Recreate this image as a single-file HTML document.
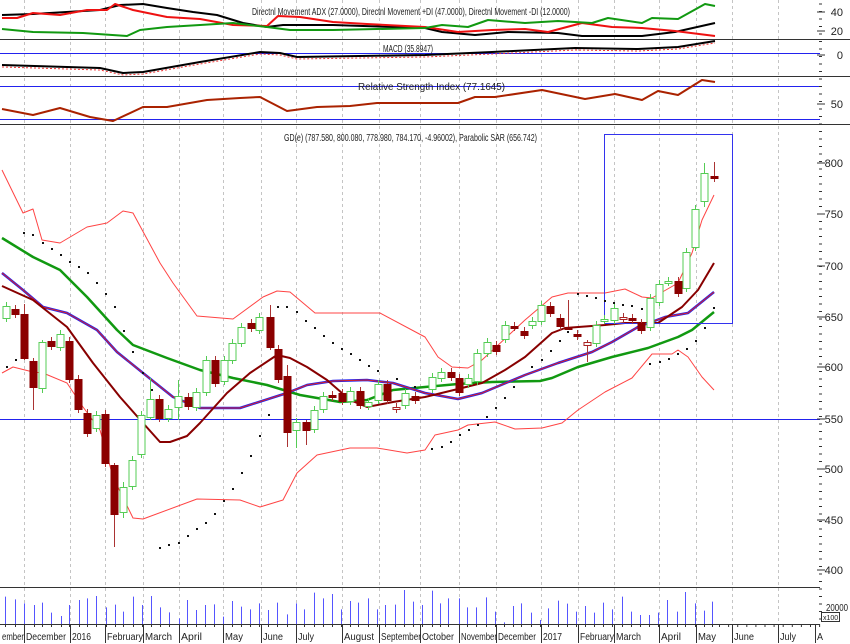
<!DOCTYPE html>
<html><head><meta charset="utf-8">
<style>
html,body{margin:0;padding:0;background:#fff;width:850px;height:644px;overflow:hidden}
svg{display:block}
text{font-family:"Liberation Sans Narrow","Liberation Sans",sans-serif;fill:#222}
</style></head>
<body>
<svg id="c" width="850" height="644" viewBox="0 0 850 644" xmlns="http://www.w3.org/2000/svg">
<rect width="850" height="644" fill="#fff"/>
<g id="grid"></g>
<g id="lines"></g>
<g id="cand"></g>
<g id="txt">
<text x="252" y="15" font-size="10" textLength="318" lengthAdjust="spacingAndGlyphs">Directnl Movement ADX (27.0000), Directnl Movement +DI (47.0000), Directnl Movement -DI (12.0000)</text>
<text x="383" y="52" font-size="10" textLength="50" lengthAdjust="spacingAndGlyphs">MACD (35.8947)</text>
<text x="358" y="90" font-size="10" textLength="147" lengthAdjust="spacingAndGlyphs">Relative Strength Index (77.1645)</text>
<text x="284" y="141" font-size="10" textLength="253" lengthAdjust="spacingAndGlyphs">GD(e) (787.580, 800.080, 778.980, 784.170, -4.96002), Parabolic SAR (656.742)</text>
</g>
</svg>
<script>
var NS="http://www.w3.org/2000/svg";
function el(parent,tag,attrs,txt){var e=document.createElementNS(NS,tag);for(var k in attrs)e.setAttribute(k,attrs[k]);if(txt!=null)e.textContent=txt;document.getElementById(parent).appendChild(e);return e;}
function pl(pts,color,w,extra){var d=pts.map(function(p){return p[0]+","+p[1]}).join(" ");var a={points:d,fill:"none",stroke:color,"stroke-width":w,"stroke-linejoin":"round"};if(extra)for(var k in extra)a[k]=extra[k];el("lines","polyline",a);}
var gx=[24,70,105,143,179,223,261,296,342,379,420,459,496,541,578,614,659,696,732,778];
gx.forEach(function(x){el("grid","line",{x1:x+0.5,y1:0,x2:x+0.5,y2:624,stroke:"#c4c4c4","stroke-width":1,"stroke-dasharray":"3,3"});});
[[39,850],[76,850],[124,850],[587,820]].forEach(function(s){el("grid","line",{x1:0,y1:s[0]+0.5,x2:s[1],y2:s[0]+0.5,stroke:"#333","stroke-width":1});});
el("grid","line",{x1:0,y1:624.5,x2:820,y2:624.5,stroke:"#333","stroke-width":1});
[53,86,119,419].forEach(function(y){el("grid","line",{x1:0,y1:y+0.5,x2:820,y2:y+0.5,stroke:"#2222ee","stroke-width":1});});
for(var y=4;y<624;y+=7.5){el("grid","line",{x1:819,y1:y,x2:822,y2:y,stroke:"#333","stroke-width":1});}
[[12,"40"],[31,"20"],[55,"0"],[104,"50"],[163,"800"],[214,"750"],[266,"700"],[317,"650"],[367,"600"],[419,"550"],[469,"500"],[520,"450"],[570,"400"]].forEach(function(a){
 el("grid","line",{x1:817,y1:a[0],x2:825,y2:a[0],stroke:"#333","stroke-width":1});
 el("txt","text",{x:843,y:a[0]+4,"font-size":"11","text-anchor":"end"},a[1]);
});
el("txt","text",{x:826,y:611,"font-size":"10",textLength:"22",lengthAdjust:"spacingAndGlyphs"},"20000");
el("grid","rect",{x:821.5,y:612.5,width:18,height:9,fill:"#fff",stroke:"#333","stroke-width":1});
el("txt","text",{x:823,y:620,"font-size":"7"},"x100");
pl([[2,15],[33,14],[100,10],[120,5],[143,4],[167,8],[193,12],[217,15],[243,23],[267,27],[283,25],[333,25],[425,28],[442,32],[475,35],[508,32],[558,33],[582,36],[642,36],[675,32],[715,23]],"#000",2);
pl([[2,18],[17,18],[33,13],[60,15],[87,10],[107,10],[115,4],[133,10],[167,17],[200,19],[233,25],[267,26],[278,16],[300,17],[333,22],[367,24],[425,27],[458,32],[492,30],[525,29],[548,32],[582,23],[612,27],[642,28],[675,31],[715,36]],"#ee1111",2);
pl([[2,29],[33,32],[83,33],[127,36],[140,30],[167,27],[200,25],[233,23],[267,27],[290,30],[333,30],[425,28],[442,25],[468,27],[488,20],[525,23],[558,21],[592,23],[608,18],[642,23],[652,18],[678,19],[705,4],[715,6]],"#119911",2);
var macd=[[2,65],[67,67],[100,68],[123,73],[143,72],[200,62],[260,52],[280,53],[297,57],[425,55],[492,52],[575,48],[638,49],[678,47],[715,41]];
pl(macd.map(function(p){return [p[0],p[1]+2]}),"#ee3333",1,{"stroke-dasharray":"2,2"});
pl(macd,"#000",2);
pl([[2,109],[33,115],[60,108],[90,117],[113,121],[143,107],[167,107],[207,100],[240,98],[260,97],[287,111],[317,107],[350,106],[377,103],[425,103],[458,103],[475,97],[495,97],[542,90],[585,99],[615,94],[642,100],[658,91],[678,95],[702,80],[715,82]],"#aa2200",2);
pl([[2,170],[23,213],[33,209],[42,240],[60,243],[87,227],[107,223],[123,211],[133,213],[160,263],[173,283],[197,316],[233,319],[263,297],[277,291],[290,292],[315,313],[380,313],[425,337],[438,357],[452,367],[468,368],[482,360],[525,320],[552,297],[568,293],[605,293],[625,289],[642,297],[652,298],[678,283],[692,253],[702,220],[714,195]],"#ff4444",1);
pl([[2,373],[13,367],[33,372],[43,373],[67,383],[83,407],[100,430],[113,477],[133,518],[143,519],[197,499],[240,500],[260,507],[283,500],[297,473],[317,455],[350,448],[377,448],[407,453],[425,450],[435,435],[458,430],[468,425],[495,422],[515,429],[542,428],[562,423],[578,410],[605,392],[632,378],[652,354],[672,354],[678,350],[688,357],[702,377],[714,390]],"#ff4444",1);
pl([[2,238],[33,257],[60,270],[87,297],[117,330],[133,345],[167,358],[200,370],[233,378],[267,385],[300,395],[340,402],[367,400],[393,390],[425,387],[458,384],[492,382],[540,381],[552,378],[578,367],[612,357],[648,348],[678,337],[692,330],[714,312]],"#119911",2.5);
var pur=[[2,273],[23,290],[43,307],[67,313],[97,330],[117,352],[143,373],[173,397],[200,408],[240,408],[287,393],[307,385],[333,381],[367,380],[393,383],[425,393],[458,399],[482,393],[525,375],[558,363],[592,352],[612,342],[638,327],[665,317],[688,313],[714,292]];
pl(pur,"#2222ee",2.5);
pl(pur,"#dd2222",1);
pl([[2,286],[33,300],[67,327],[93,363],[120,397],[143,423],[160,442],[170,442],[187,436],[200,423],[227,393],[250,373],[277,355],[290,358],[307,367],[327,380],[350,400],[367,407],[393,402],[425,397],[458,389],[482,383],[505,370],[525,357],[552,333],[565,328],[605,325],[625,323],[658,323],[682,307],[698,290],[714,263]],"#880000",2);
el("lines","rect",{x:604.5,y:134.5,width:128,height:189,fill:"none",stroke:"#3333ee","stroke-width":1});
[[7,367],[16,360],[24,233],[33,235],[43,243],[52,249],[61,255],[70,262],[79,267],[88,273],[97,283],[106,294],[115,307],[124,331],[133,352],[143,373],[152,390],[160,548],[169,545],[179,543],[188,536],[197,529],[206,523],[215,514],[224,501],[233,489],[242,473],[251,456],[260,436],[269,415],[278,307],[287,307],[297,312],[306,321],[315,328],[324,336],[333,343],[342,349],[351,354],[360,360],[369,366],[378,371],[397,379],[415,387],[432,449],[442,447],[451,442],[460,435],[469,430],[478,425],[487,417],[496,408],[505,398],[514,387],[532,367],[542,360],[551,351],[560,341],[568,332],[578,294],[587,296],[596,298],[605,301],[614,303],[623,305],[632,306],[642,309],[650,364],[660,362],[669,359],[678,354],[687,349],[696,341],[705,328],[714,308]].forEach(function(p){el("lines","rect",{x:p[0]-1,y:p[1]-1,width:2,height:2,fill:"#111"});});
var C=[[6,306,318,"g"],[15,309,314,"r"],[24,314,358,"r"],[33,361,387,"r"],[42,342,388,"g"],[51,341,346,"r"],[60,334,347,"g"],[69,341,379,"r"],[78,379,409,"r"],[87,413,433,"r"],[96,415,428,"g"],[105,414,463,"r"],[114,465,514,"r"],[123,487,512,"g"],[132,460,486,"g"],[141,415,454,"g"],[150,399,417,"g"],[159,399,418,"r"],[168,409,418,"g"],[178,396,407,"g"],[188,397,406,"r"],[196,392,407,"g"],[206,360,392,"g"],[215,360,383,"r"],[224,360,381,"g"],[232,343,360,"g"],[241,327,343,"g"],[251,323,328,"r"],[259,317,330,"g"],[270,317,347,"r"],[278,349,379,"r"],[287,376,432,"r"],[296,422,430,"g"],[306,422,430,"r"],[314,410,429,"g"],[323,396,409,"g"],[332,395,397,"r"],[342,393,401,"r"],[350,391,401,"g"],[360,391,405,"r"],[368,402,406,"g"],[378,384,400,"g"],[387,384,400,"r"],[396,407,409,"h"],[405,393,405,"g"],[415,396,400,"r"],
[432,377,389,"g"],[441,372,378,"g"],[451,372,377,"r"],[459,378,392,"r"],[468,378,384,"g"],[477,353,381,"g"],[487,342,353,"g"],[496,345,351,"r"],[505,325,339,"g"],[514,326,327,"r"],[524,331,335,"r"],[532,321,325,"g"],[541,305,321,"g"],[550,306,313,"r"],[560,318,326,"r"],[568,327,328,"r"],[577,334,336,"r"],[587,342,345,"h"],[596,325,343,"g"],[604,319,320,"g"],[614,308,320,"g"],[623,317,319,"h"],[632,318,320,"r"],[641,323,330,"r"],[650,298,327,"g"],[659,284,302,"g"],[668,281,282,"g"],[678,281,293,"r"],[686,252,288,"g"],[695,209,247,"g"],[704,173,201,"g"],[714,176,178,"r"]];
var wick={24:[304,360],33:[358,410],114:[463,547],270:[305,350],287:[365,447],568:[300,330],587:[340,362],704:[163,207],714:[162,182],123:[482,518],42:[340,393],150:[378,420],178:[380,420],260:[305,333],296:[418,448],306:[420,445]};
C.forEach(function(c){
 var x=c[0],a=c[1],b=c[2],t=c[3];
 var col=t=="g"?"#55cc55":(t=="h"?"#aa2222":"#8b0000");
 var w=wick[x]||[a-4,b+4];
 el("cand","line",{x1:x+0.5,y1:w[0],x2:x+0.5,y2:w[1],stroke:t=="g"?"#55cc55":"#aa3333","stroke-width":1});
 var h=Math.max(b-a,2);
 if(t=="g"||t=="h") el("cand","rect",{x:x-3,y:a+0.5,width:7,height:h,fill:"#fff",stroke:col,"stroke-width":1});
 else el("cand","rect",{x:x-3.5,y:a,width:8,height:h+1,fill:col});
});
var V=[[10,80],[27,88],[45,100],[62,105],[78,98],[95,128],[112,138],[128,105],[145,90],[160,85],[178,78],[195,112],[212,104],[228,125],[245,80],[262,105],[278,78],[295,112],[312,127],[330,145],[345,90],[362,120],[378,105],[395,103],[412,140],[428,93],[445,110],[462,118],[478,100],[495,120],[512,98],[530,133],[547,100],[562,118],[580,68],[597,85],[613,72],[630,118],[647,93],[662,98],[680,85],[697,118],[712,105],[730,104],[747,60],[763,95],[780,105],[797,62],[812,100],[828,85],[847,85],[863,112],[880,112],[897,82],[914,125],[930,157],[947,108],[963,100],[980,128],[997,150],[1013,115],[1030,92],[1047,101],[1063,125],[1080,108],[1097,128],[1113,98],[1130,118],[1148,80],[1165,125],[1183,135],[1198,135],[1215,128],[1232,90],[1250,125],[1266,66],[1283,100],[1300,122],[1315,95]];
V.forEach(function(v){var x=Math.round(v[0]/1.847)+0.5;el("cand","line",{x1:x,y1:570+v[1]/3,x2:x,y2:624,stroke:"#5555ff","stroke-width":1});
 el("cand","line",{x1:x,y1:624,x2:x,y2:627,stroke:"#333","stroke-width":1});});
for(var x=719.5;x<820;x+=9.1){el("cand","line",{x1:x,y1:624,x2:x,y2:627,stroke:"#333","stroke-width":1});}
[[0,"ember",22],[24,"December",40],[70,"2016",19],[105,"February",36],[143,"March",27],[179,"April",21],[223,"May",18],[261,"June",20],[296,"July",16],[342,"August",30],[379,"September",40],[420,"October",32],[459,"November",36],[496,"December",38],[541,"2017",19],[578,"February",34],[614,"March",25],[659,"April",20],[696,"May",18],[732,"June",20],[778,"July",16],[815,"A",6]].forEach(function(d){
 if(d[0]>0) el("grid","line",{x1:d[0]+0.5,y1:624,x2:d[0]+0.5,y2:643,stroke:"#333","stroke-width":1});
 el("txt","text",{x:d[0]+2,y:640,"font-size":"10",textLength:d[2],lengthAdjust:"spacingAndGlyphs"},d[1]);
});
</script>
</body></html>
